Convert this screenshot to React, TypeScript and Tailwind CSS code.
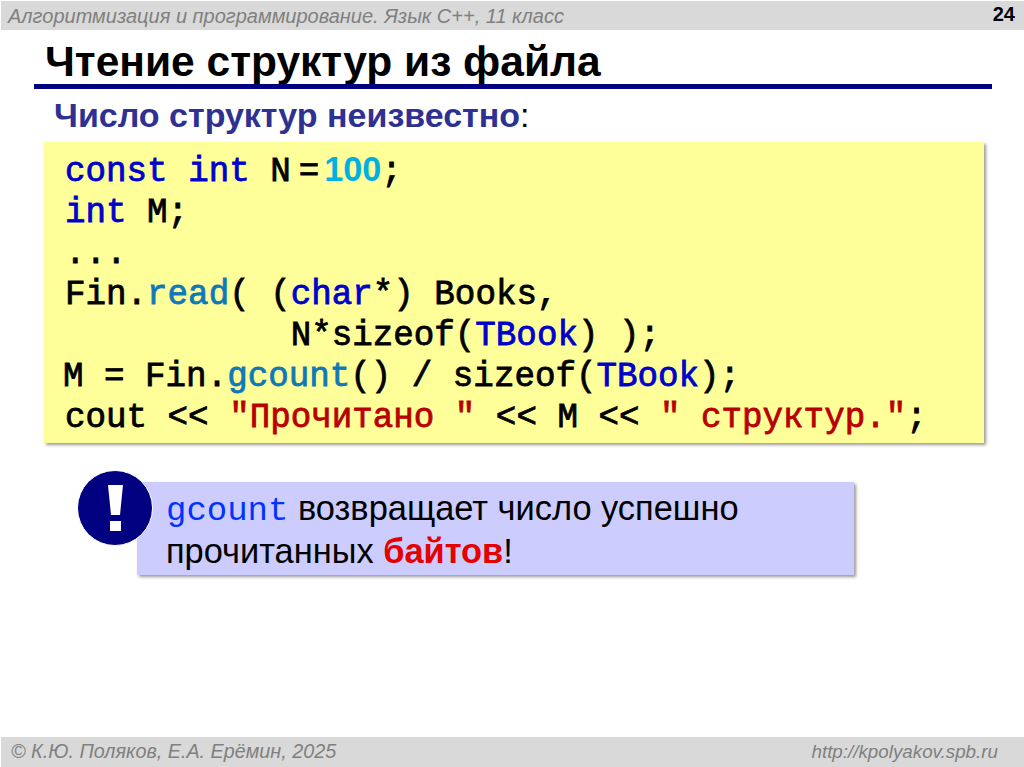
const mono = "font-['Liberation_Mono',monospace]";

const Kw = ({ children }: any) => <span className="text-[#0000cc]">{children}</span>;
const Fn = ({ children }: any) => <span className="text-[#0f78b8]">{children}</span>;
const Str = ({ children }: any) => <span className="text-[#b80000]">{children}</span>;

const App = () => {
  return (
    <div className="w-[1024px] h-[767px] bg-white flex flex-col overflow-hidden font-['Liberation_Sans',sans-serif]">
      <header className="mt-px ml-px h-[29px] bg-[#d9d9d9] flex items-center justify-between pl-[7px] pr-[9px]">
        <span className="italic text-[20px] text-[#808080]">
          Алгоритмизация и программирование. Язык С++, 11 класс
        </span>
        <b className="text-[20px] text-black -mt-[3px]">24</b>
      </header>

      <h1 className="ml-[45px] mt-[9px] h-[45px] leading-[45px] font-bold text-[42.5px] text-black whitespace-nowrap">
        Чтение структур из файла
      </h1>
      <div className="ml-[34px] w-[958px] h-[5px] bg-[#000080]"></div>

      <p className="ml-[54px] mt-[5px] h-[42px] leading-[42px] text-[34px] text-black whitespace-nowrap">
        <b className="text-[#2e3192]">Число структур неизвестно</b>:
      </p>

      <pre
        className={`${mono} ml-[44px] mt-[6px] w-[940px] h-[301px] pl-[21px] pt-[7px] bg-[#ffff99] shadow-[2px_2px_3px_#999999] text-[34.2px] leading-[41px] text-black [-webkit-text-stroke:0.8px]`}
      >
        <Kw>const</Kw> <Kw>int</Kw> N<span className="ml-[8px]">=</span>
        <span className="ml-[5px] text-[#00b0e0] font-bold font-['Liberation_Sans',sans-serif] [-webkit-text-stroke:0px]">100</span>;{"\n"}
        <Kw>int</Kw> M;{"\n"}...{"\n"}Fin.<Fn>read</Fn>( (<Kw>char</Kw>*) Books,{"\n"}
        {"           N*sizeof("}<Kw>TBook</Kw>) );{"\n"}
        <span className="-ml-[2px]">M</span> = Fin.<Fn>gcount</Fn>() / sizeof(<Kw>TBook</Kw>);{"\n"}
        cout &lt;&lt; <Str>"Прочитано "</Str> &lt;&lt; M &lt;&lt; <Str>" структур."</Str>;
      </pre>

      <div className="relative ml-[137px] mt-[39px] w-[717px] h-[93px] pl-[29px] pt-[5px] bg-[#ccccff] shadow-[2px_2px_3px_#999999] text-[34.4px] leading-[43px] text-black">
        <div className="absolute -left-[60px] -top-[12px] w-[76px] h-[76px] rounded-full bg-[#000080] border border-white flex items-center justify-center">
          <svg width="15" height="46" viewBox="0 0 15 46" fill="#ffffff">
            <polygon points="0,0 15,0 12,30 3,30" />
            <rect x="2" y="36" width="11" height="10" />
          </svg>
        </div>
        <div className="whitespace-nowrap">
          <span className={`${mono} text-[#0033ff] text-[34px] leading-none`}>gcount</span> возвращает число успешно
        </div>
        <div className="whitespace-nowrap">
          прочитанных <b className="text-[#e60000]">байтов</b>!
        </div>
      </div>

      <footer className="mt-auto ml-px h-[30px] bg-[#d9d9d9] flex items-center justify-between pl-[10px] pr-[26px] italic text-[#808080]">
        <span className="text-[19.8px]">© К.Ю. Поляков, Е.А. Ерёмин, 2025</span>
        <span className="text-[18.8px]">http://kpolyakov.spb.ru</span>
      </footer>
    </div>
  );
};

export default App;
